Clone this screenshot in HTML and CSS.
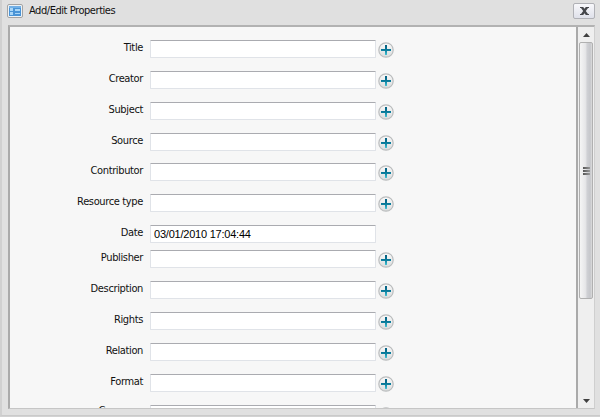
FILE: index.html
```
<!DOCTYPE html>
<html lang="en">
<head>
<meta charset="utf-8">
<title>Add/Edit Properties</title>
<link rel="stylesheet" href="styles.css">
</head>
<body>
<svg class="defs" width="0" height="0">
  <defs>
    <linearGradient id="disc" x1="0" y1="0" x2="0" y2="1"><stop offset="0" stop-color="#fafafa"/><stop offset="1" stop-color="#d9dcdd"/></linearGradient>
    <linearGradient id="cross" x1="0" y1="0" x2="0" y2="1"><stop offset="0" stop-color="#075e80"/><stop offset=".5" stop-color="#087a9a"/><stop offset="1" stop-color="#45c3d5"/></linearGradient>
    <symbol id="add" viewBox="0 0 16 16">
      <circle cx="8" cy="8" r="7.2" fill="url(#disc)" stroke="#bbbdbe" stroke-width="1.2"/>
      <path d="M7 3h2v4h4v2H9v4H7V9H3V7h4z" fill="url(#cross)"/>
    </symbol>
  </defs>
</svg>
<div class="window">
  <header class="titlebar">
    <svg class="app-icon" width="16" height="14" viewBox="0 0 16 14">
      <rect x=".5" y=".5" width="15" height="13" rx="1.5" fill="#edf2f6" stroke="#a3a3a3"/>
      <path fill="#4a94d6" d="M2 2h12v10H2z"/>
      <path fill="#72b0e6" d="M2 2h12v2H2z"/>
      <path fill="#a9d6f7" d="M3 4h3v3H3zM3 8h3v3H3zM8 5h5v2H8zM8 9h5v1H8z"/>
    </svg>
    <h1 class="title">Add/Edit Properties</h1>
    <button class="close" aria-label="Close"><svg width="9" height="8" viewBox="0 0 9 8"><path fill="#45474b" d="M0 0h3.2l1.3 1.8L5.8 0H9v1H8L5.8 4 8 7h1v1H5.8L4.5 6.2 3.2 8H0V7h1l2.2-3L1 1H0z"/></svg></button>
  </header>
  <main class="panel">
    <form class="form">
      <div class="row"><label>Title</label><input><svg class="add"><use href="#add"/></svg></div>
      <div class="row"><label>Creator</label><input><svg class="add"><use href="#add"/></svg></div>
      <div class="row"><label>Subject</label><input><svg class="add"><use href="#add"/></svg></div>
      <div class="row tight"><label>Source</label><input><svg class="add"><use href="#add"/></svg></div>
      <div class="row"><label>Contributor</label><input><svg class="add"><use href="#add"/></svg></div>
      <div class="row"><label>Resource type</label><input><svg class="add"><use href="#add"/></svg></div>
      <div class="row date"><label>Date</label><input value="03/01/2010 17:04:44"></div>
      <div class="row"><label>Publisher</label><input><svg class="add"><use href="#add"/></svg></div>
      <div class="row"><label>Description</label><input><svg class="add"><use href="#add"/></svg></div>
      <div class="row"><label>Rights</label><input><svg class="add"><use href="#add"/></svg></div>
      <div class="row"><label>Relation</label><input><svg class="add"><use href="#add"/></svg></div>
      <div class="row"><label>Format</label><input><svg class="add"><use href="#add"/></svg></div>
      <div class="row last"><label>Coverage</label><input><svg class="add"><use href="#add"/></svg></div>
    </form>
    <div class="scrollbar">
      <div class="arrow"><svg width="7" height="4" viewBox="0 0 7 4"><path d="M3.5 0 7 4H0z" fill="#404040"/></svg></div>
      <div class="thumb"><i></i><i></i><i></i></div>
      <div class="arrow down"><svg width="7" height="4" viewBox="0 0 7 4"><path d="M0 0h7L3.5 4z" fill="#404040"/></svg></div>
    </div>
  </main>
</div>
</body>
</html>
```
FILE: styles.css
```
* { box-sizing: border-box; }
body {
  margin: 0;
  height: 417px;
  overflow: hidden;
  background: #d2d2d2;
  font-family: "DejaVu Sans Condensed", "DejaVu Sans", sans-serif;
  font-stretch: condensed;
  font-size: 11px;
  color: #111;
}
.defs { display: block; height: 0; }
.window {
  height: 416px;
  padding: 0 5px 7px 6px;
  background: #e0e0e0;
  border-left: 2px solid #d0d0d0;
  border-bottom: 1px solid #cacaca;
}
.titlebar {
  display: flex;
  align-items: flex-start;
  height: 25px;
}
.app-icon { flex: none; margin: 4px 6px 0 -1px; }
.title {
  flex: 1;
  margin: 4px 0 0;
  font-size: 11px;
  line-height: 14px;
  font-weight: normal;
  letter-spacing: -.45px;
}
.close {
  width: 22px;
  height: 16px;
  margin-top: 3px;
  padding: 0;
  display: flex;
  align-items: center;
  justify-content: center;
  border: 1px solid #b0b1b6;
  border-radius: 2px;
  background: linear-gradient(#f8f8fb, #dfe1ea);
}
.panel {
  display: flex;
  height: 384px;
  border: 1px solid #c6c6c6;
  border-top: 2px solid #b2b2b2;
  border-left: 2px solid #aaa;
  border-right: 1px solid #cfcfcf;
  background: #f7f7f7;
}
.form {
  flex: 1;
  margin: 0;
  padding-top: 13px;
  overflow: hidden;
  border-right: 2px solid #aaa;
}
.row {
  display: flex;
  align-items: flex-start;
  height: 31px;
}
.row.tight { height: 30px; }
.row.date { height: 25px; }
.row label {
  width: 133px;
  line-height: 15px;
  text-align: right;
  letter-spacing: -.36px;
}
.row.last label { line-height: 12px; }
.row input {
  width: 226px;
  height: 18px;
  margin: 0 0 0 7px;
  padding: 0 3px;
  border: 1px solid #e0e3e8;
  border-top-color: #aaabb0;
  border-radius: 1px;
  background: #fff;
  color: #000;
  font: 11px "Liberation Sans", Arial, sans-serif;
  letter-spacing: -.22px;
}
.add { width: 16px; height: 16px; margin: 2px 0 0 2px; }
.scrollbar {
  width: 16px;
  display: flex;
  flex-direction: column;
  padding: 0 1px;
  background: #efefef;
}
.arrow {
  height: 15px;
  display: flex;
  align-items: center;
  justify-content: center;
}
.arrow.down { margin-top: auto; }
.thumb {
  width: 14px;
  height: 257px;
  display: flex;
  flex-direction: column;
  align-items: center;
  justify-content: center;
  gap: 1px;
  border: 1px solid #b0b0b0;
  border-radius: 2px;
  background: linear-gradient(90deg, #f5f5f5, #e6e6e8 45%, #cfd0d4 60%, #c6c7cb 85%, #dcdcdc);
}
.thumb i {
  width: 7px;
  height: 2px;
  background: linear-gradient(90deg, #555, #999);
}
```
